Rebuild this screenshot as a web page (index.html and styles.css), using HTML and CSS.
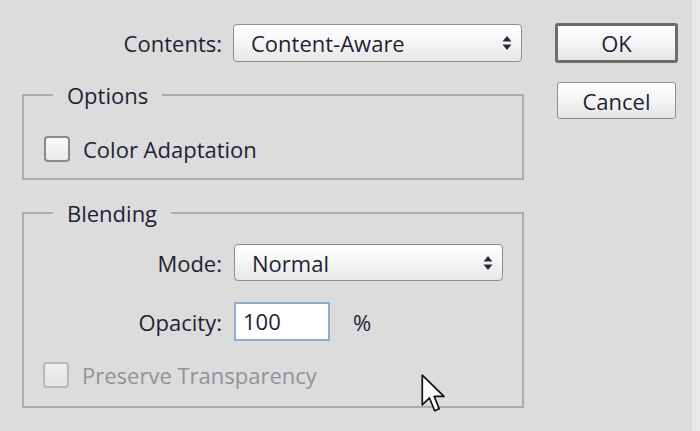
FILE: index.html
```html
<!doctype html>
<html lang="en">
  <head>
    <meta charset="UTF-8" />
    <meta name="viewport" content="width=device-width, initial-scale=1.0" />
    <title>Fill</title>
    <link rel="stylesheet" href="styles.css">
  </head>
  <body>
    <div class="dialog">
      <div class="main">
        <div class="field top-field">
          <span class="field-label">Contents:</span>
          <div class="select select-wide">
            <span>Content-Aware</span>
            <svg class="spin" width="10" height="16" viewBox="0 0 10 16"><path d="M5 1 L9.5 6.5 H0.5 Z M5 15 L9.5 9.5 H0.5 Z" fill="#2a2a3a"/></svg>
          </div>
        </div>

        <fieldset class="group options">
          <legend>Options</legend>
          <label class="check">
            <span class="box"></span>
            <span>Color Adaptation</span>
          </label>
        </fieldset>

        <fieldset class="group blending">
          <legend>Blending</legend>
          <div class="field">
            <span class="field-label">Mode:</span>
            <div class="select select-mode">
              <span>Normal</span>
              <svg class="spin" width="10" height="16" viewBox="0 0 10 16"><path d="M5 1 L9.5 6.5 H0.5 Z M5 15 L9.5 9.5 H0.5 Z" fill="#2a2a3a"/></svg>
            </div>
          </div>
          <div class="field opacity-field">
            <span class="field-label">Opacity:</span>
            <div class="text-input">100</div>
            <span class="unit">%</span>
          </div>
          <label class="check disabled">
            <span class="box"></span>
            <span>Preserve Transparency</span>
          </label>
        </fieldset>
      </div>

      <div class="buttons">
        <button class="btn btn-default">OK</button>
        <button class="btn">Cancel</button>
      </div>
    </div>

    <svg class="cursor" width="25" height="39" viewBox="0 0 13 20.5">
      <path d="M0.6 0.6 V16.2 L4.4 12.6 L7.1 19.3 L9.5 18.3 L6.9 11.8 H12 Z" fill="#fff" stroke="#111" stroke-width="0.9" stroke-linejoin="round"/>
    </svg>
  </body>
</html>
```

FILE: styles.css
```css
html,
body {
  margin: 0;
  padding: 0;
  height: 100%;
  overflow: hidden;
}
body {
  background: #dcdcdc;
  color: #1f1f36;
  font-family: "Open Sans", "Noto Sans", sans-serif;
  font-size: 22px;
  position: relative;
  border-right: 8px solid #e8e8e8;
  box-sizing: border-box;
}
.dialog {
  display: flex;
  padding: 23px 0 0 22px;
}
.main {
  width: 502px;
}
.field {
  display: flex;
  align-items: center;
}
.field-label {
  width: 199px;
  text-align: right;
  margin-right: 12px;
}
.top-field {
  margin-top: 1px;
}
.top-field .field-label {
  width: 200px;
  margin-right: 11px;
}
.select {
  display: flex;
  align-items: center;
  justify-content: space-between;
  box-sizing: border-box;
  border: 1.5px solid #8e8e8e;
  border-radius: 4px;
  background: linear-gradient(#ffffff, #f4f4f4 55%, #e6e6e6);
  padding: 0 9px 0 17px;
}
.select-wide {
  width: 289px;
  height: 38px;
}
.select-mode {
  width: 269px;
  height: 37px;
}
.group {
  margin: 0;
  padding: 0 0 0 20px;
  border: 2px solid #acacac;
  min-width: 0;
}
.group legend {
  margin-left: 9px;
  padding: 0 14px;
  line-height: 30px;
}
.options {
  margin-top: 18px;
  padding-top: 25px;
  padding-bottom: 16px;
}
.blending {
  margin-top: 18px;
  padding: 16px 0 18px 0;
}
.blending legend {
  margin-left: 29px;
}
.blending .field-label {
  width: 198px;
}
.blending .check {
  margin-left: 19px;
}
.opacity-field {
  margin-top: 21px;
}
.text-input {
  box-sizing: border-box;
  width: 96px;
  height: 39px;
  border: 2px solid #8eaccb;
  background: #fff;
  padding: 0 7px;
  line-height: 35px;
  color: #1c1c34;
}
.unit {
  margin-left: 23px;
}
.check {
  display: flex;
  align-items: center;
  gap: 13px;
  height: 27px;
}
.blending .check {
  margin-top: 20px;
}
.box {
  box-sizing: border-box;
  width: 26px;
  height: 26px;
  border: 2px solid #8a8a8a;
  border-radius: 4px;
  background: linear-gradient(#fbfbfb, #e9e9e9);
}
.check.disabled {
  color: #929298;
}
.check.disabled .box {
  border-color: #b9b9b9;
  background: linear-gradient(#efefef, #e2e2e2);
}
.buttons {
  display: flex;
  flex-direction: column;
  align-items: center;
  margin-left: 31px;
  width: 123px;
}
.btn {
  font-family: inherit;
  font-size: 22px;
  color: #1f1f36;
  box-sizing: border-box;
  width: 119px;
  height: 37px;
  padding: 0;
  border: 1.5px solid #8e8e8e;
  border-radius: 3px;
  background: linear-gradient(#ffffff, #f3f3f3 55%, #e4e4e4);
}
.btn-default {
  width: 123px;
  height: 40px;
  border: 3px solid #6c6c6c;
  margin-bottom: 19px;
}
.cursor {
  position: absolute;
  left: 421px;
  top: 374px;
}
```
